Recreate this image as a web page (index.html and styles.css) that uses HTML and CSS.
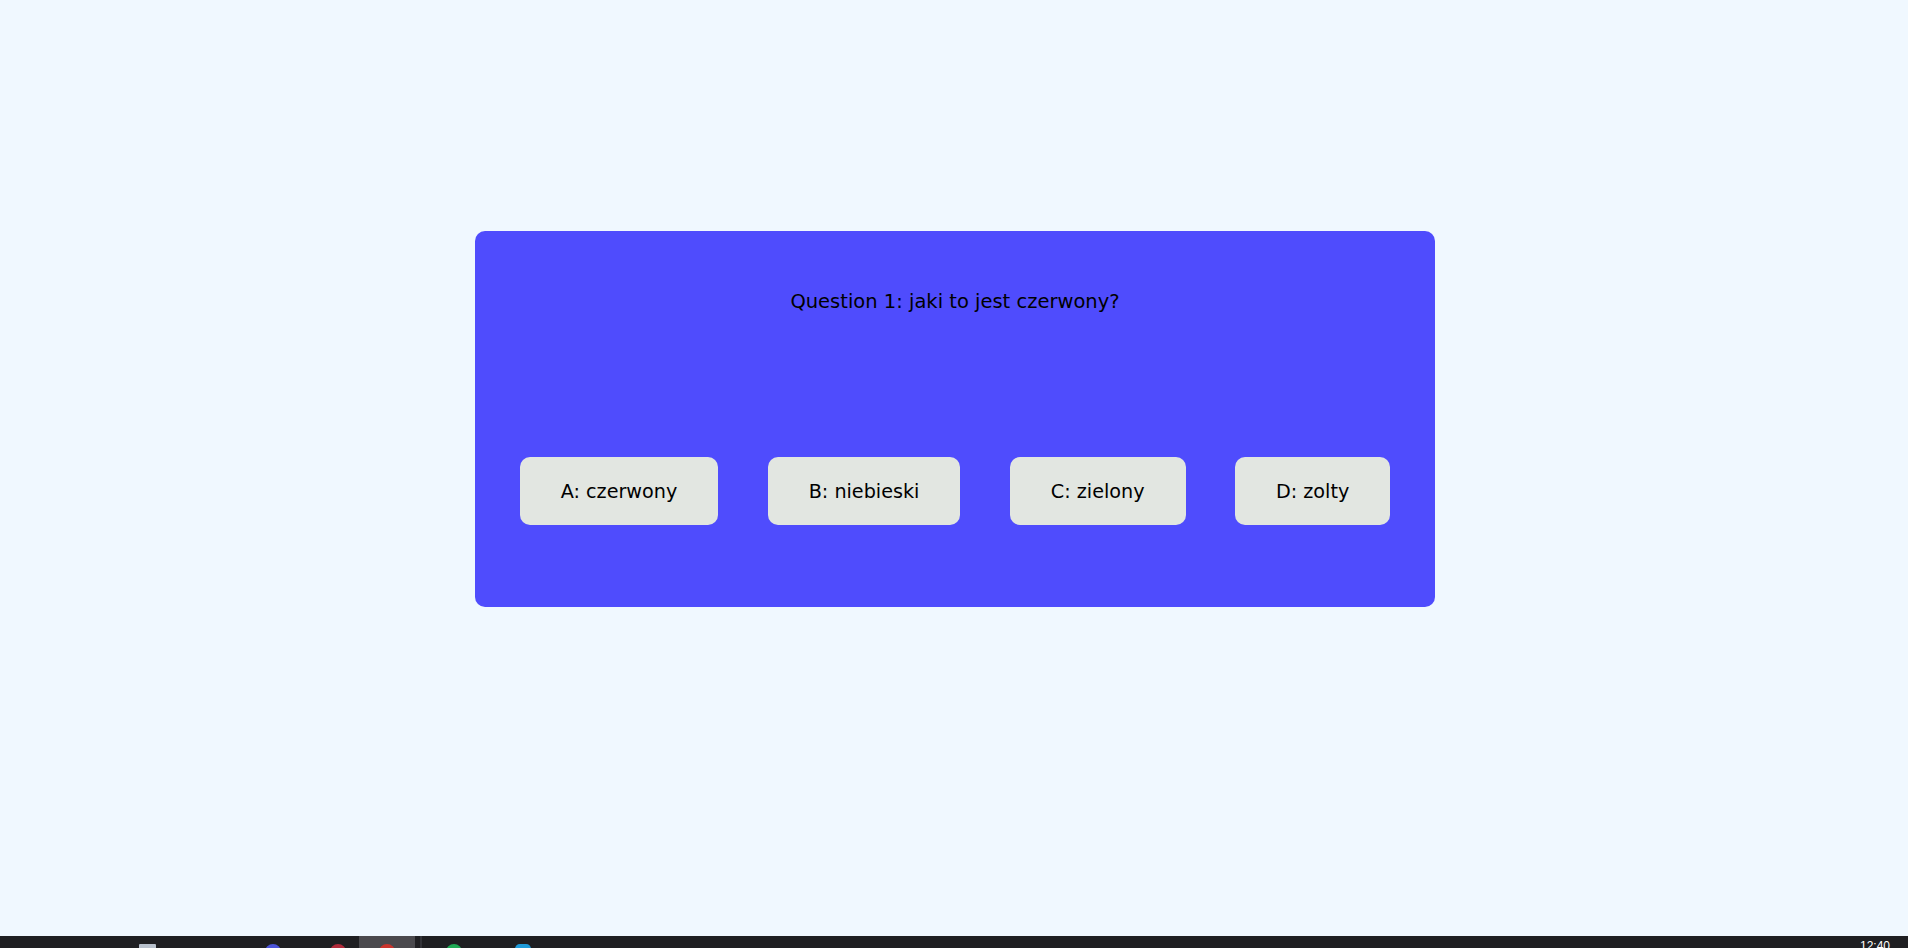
FILE: index.html
```html
<!DOCTYPE html>
<html lang="pl">
<head>
<meta charset="utf-8">
<title>Quiz</title>
<link rel="stylesheet" href="styles.css">
</head>
<body>
<main class="page">
  <section class="quiz-card">
    <p class="question">Question 1: jaki to jest czerwony?</p>
    <div class="answers">
      <button class="answer">A: czerwony</button>
      <button class="answer">B: niebieski</button>
      <button class="answer">C: zielony</button>
      <button class="answer">D: zolty</button>
    </div>
  </section>
</main>
<footer class="taskbar">
  <div class="tb-left">
    <span class="tb-icon tb-win"></span>
    <span class="tb-icon tb-blue"></span>
    <span class="tb-icon tb-red"></span>
    <span class="tb-tile"><span class="tb-icon tb-red2"></span></span>
    <span class="tb-sep"></span>
    <span class="tb-icon tb-green"></span>
    <span class="tb-icon tb-cyan"></span>
  </div>
  <div class="tb-clock">12:40</div>
</footer>
</body>
</html>
```

FILE: styles.css
```css
html, body {
  margin: 0;
  padding: 0;
}
body {
  background: #f0f8ff;
  font-family: "DejaVu Sans", "Liberation Sans", sans-serif;
  color: #000;
  height: 948px;
  overflow: hidden;
  display: flex;
  flex-direction: column;
}
.page {
  height: 936px;
  display: flex;
  flex-direction: column;
  align-items: center;
}
.quiz-card {
  margin-top: 231px;
  margin-left: 2px;
  width: 960px;
  box-sizing: border-box;
  background: #4f4cfd;
  border-radius: 10px;
  padding: 60px 20px 82px;
}
.question {
  margin: 0 0 144px;
  text-align: center;
  font-size: 19.5px;
  line-height: 22px;
}
.answers {
  display: flex;
  justify-content: space-around;
}
.answer {
  height: 68px;
  padding: 0 41px;
  border: none;
  border-radius: 10px;
  background: #e2e6e1;
  font-family: "DejaVu Sans", "Liberation Sans", sans-serif;
  font-size: 19.2px;
  color: #000;
  cursor: pointer;
}
.taskbar {
  height: 12px;
  background: #1f1f22;
  display: flex;
  justify-content: space-between;
  overflow: hidden;
}
.tb-left {
  display: flex;
  align-items: flex-start;
  height: 12px;
}
.tb-icon {
  display: block;
  width: 16px;
  height: 16px;
  border-radius: 50%;
  margin-top: 8px;
}
.tb-win {
  margin-left: 139px;
  border-radius: 1px;
  background: #b8c0cc;
  width: 17px;
}
.tb-blue {
  margin-left: 109px;
  background: #4b53d8;
}
.tb-red {
  margin-left: 49px;
  background: #b02a3a;
}
.tb-tile {
  display: flex;
  justify-content: center;
  width: 56px;
  height: 12px;
  margin-left: 13px;
  background: #4a494d;
}
.tb-red2 {
  background: #c9342d;
}
.tb-sep {
  width: 2px;
  height: 12px;
  margin-left: 5px;
  background: #333338;
}
.tb-green {
  margin-left: 24px;
  background: #1faa55;
}
.tb-cyan {
  margin-left: 53px;
  background: #1e9ad8;
  border-radius: 30% 30% 0 0;
}
.tb-clock {
  color: #fff;
  font-family: "Liberation Sans", sans-serif;
  font-size: 12px;
  line-height: 12px;
  padding-top: 4px;
  margin-right: 18px;
}
```
